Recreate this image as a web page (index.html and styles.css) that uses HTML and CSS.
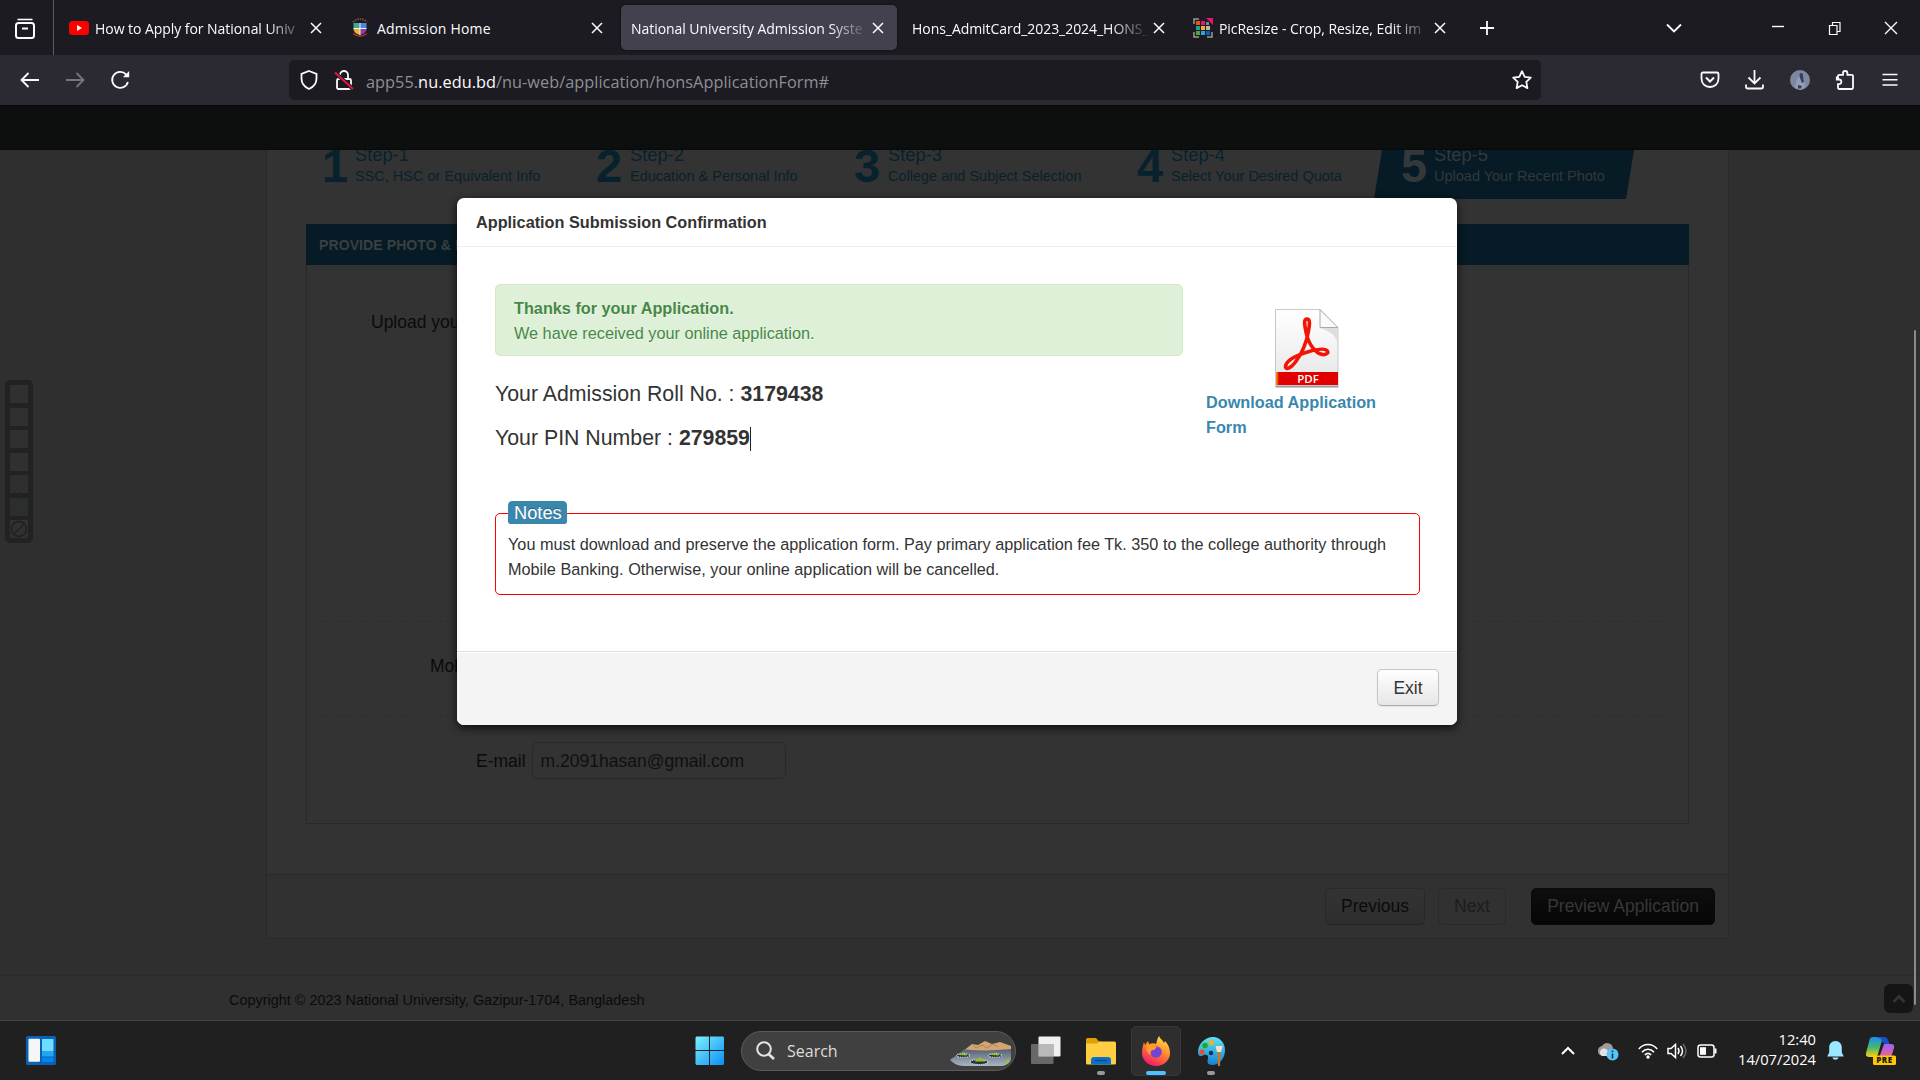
FILE: index.html
```html
<!DOCTYPE html>
<html lang="en">
<head>
<meta charset="utf-8">
<title>National University Admission System</title>
<link rel="stylesheet" href="styles.css">
</head>
<body>
<div class="tabbar">
  <div class="tab-overview">
    <svg width="22" height="22" viewBox="0 0 22 22" fill="none" stroke="#fbfbfe" stroke-width="2"><path d="M3.5 1.5h15" stroke-width="1.6"/><rect x="2" y="5" width="18" height="15" rx="2.5"/><path d="M8 10.5h6"/></svg>
  </div>
  <div class="tabs">
    <div class="tab">
      <svg class="fav" width="20" height="20" viewBox="0 0 20 20"><rect y="3" width="20" height="14" rx="3.5" fill="#f00"/><path d="M8 7l5 3-5 3z" fill="#fff"/></svg>
      <span class="tab-title fade">How to Apply for National Univ</span>
      <svg class="x" width="12" height="12" viewBox="0 0 12 12"><path d="M1 1l10 10M11 1L1 11"/></svg>
    </div>
    <div class="tab">
      <svg class="fav" width="20" height="20" viewBox="0 0 20 20"><path d="M3 4q7-6 14 0" fill="none" stroke="#7a4a36" stroke-width="2" stroke-dasharray="1.500 1"/><path d="M3.500 5H10v5.500H3.500z" fill="#3fa7a0"/><path d="M10 5h6.500v5.500H10z" fill="#4d86d8"/><path d="M3.500 10.500H10V17c-4-1-6.500-3-6.500-6.500z" fill="#e2b52c"/><path d="M10 10.500h6.500c0 3.500-2.500 5.500-6.500 6.500z" fill="#8b3ea8"/><path d="M10 5v12M3.500 10.500h13" stroke="#f3f3f3"/><path d="M3 15.500c4 3.500 10 3.500 14 0" fill="none" stroke="#a33" stroke-width="1.500"/></svg>
      <span class="tab-title wide">Admission Home</span>
      <svg class="x" width="12" height="12" viewBox="0 0 12 12"><path d="M1 1l10 10M11 1L1 11"/></svg>
    </div>
    <div class="tab active">
      <span class="tab-title fade">National University Admission Syste</span>
      <svg class="x" width="12" height="12" viewBox="0 0 12 12"><path d="M1 1l10 10M11 1L1 11"/></svg>
    </div>
    <div class="tab">
      <span class="tab-title fade">Hons_AdmitCard_2023_2024_HONS_</span>
      <svg class="x" width="12" height="12" viewBox="0 0 12 12"><path d="M1 1l10 10M11 1L1 11"/></svg>
    </div>
    <div class="tab">
      <svg class="fav" width="20" height="20" viewBox="0 0 20 20"><path d="M1 6V1h5M1 14v5h5M19 14v5h-5" fill="none" stroke="#999" stroke-width="1.500"/><path d="M13 0h7v7z" fill="#ec1075"/><path d="M3 3h4v4H3z" fill="#e8501c"/><path d="M8 3h4v4H8z" fill="#ec1075"/><path d="M13 4h3v3h-3z" fill="#4aa37c"/><path d="M3 8h4v4H3z" fill="#12a59b"/><path d="M8 8h4v4H8z" fill="#f9ad2c"/><path d="M13 8h4v4h-4z" fill="#b9b9b9"/><path d="M3 13h4v4H3z" fill="#4ca82e"/><path d="M8 13h4v4H8z" fill="#2ea3dd"/><path d="M13 13h4v4h-4z" fill="#0b60b0"/></svg>
      <span class="tab-title fade">PicResize - Crop, Resize, Edit im</span>
      <svg class="x" width="12" height="12" viewBox="0 0 12 12"><path d="M1 1l10 10M11 1L1 11"/></svg>
    </div>
  </div>
  <svg class="newtab" width="16" height="16" viewBox="0 0 16 16"><path d="M8 1v14M1 8h14"/></svg>
  <div class="window-controls">
    <svg width="56" height="16" viewBox="-28 -8 56 16"><path d="M-7-3.500L0 3.500 7-3.500" stroke-width="1.800"/></svg>
    <svg width="56" height="16" viewBox="-28 -8 56 16"><path d="M-7-1.500H5"/></svg>
    <svg width="56" height="16" viewBox="-28 -8 56 16"><path d="M-5.500-2.500h7.500v9h-7.500zM-2.500-2.500v-3h7.500v9h-3" stroke-width="1.200"/></svg>
    <svg width="56" height="16" viewBox="-28 -8 56 16"><path d="M-6-6L6 6M6-6L-6 6"/></svg>
  </div>
</div>

<div class="toolbar">
  <div class="nav-buttons">
    <svg width="20" height="20" viewBox="0 0 20 20"><path d="M19 10H2M8.500 3L1.500 10l7 7"/></svg>
    <svg class="off" width="20" height="20" viewBox="0 0 20 20"><path d="M1 10h17M11.500 3l7 7-7 7"/></svg>
    <svg width="20" height="20" viewBox="0 0 20 20"><path d="M17.900 12A8 8 0 1 1 16.200 4.600"/><path d="M19.200 1v6.300h-6.300z" fill="#fbfbfe" stroke="none"/></svg>
  </div>
  <div class="urlbar">
    <svg width="20" height="20" viewBox="0 0 20 20"><path d="M11 1l7.500 2.800v4.700c0 4.800-2.500 8.200-7.500 10.500C6 16.700 3.500 13.300 3.500 8.500V3.800z"/></svg>
    <svg class="lock" width="20" height="20" viewBox="0 0 20 20"><rect x="3" y="9" width="14" height="10" rx="1.500"/><path d="M6 9V5a4 4 0 0 1 8 0v4"/><path d="M1 2.500L19 19" stroke="#1c1b22" stroke-width="4"/><path d="M1 2.500L19 19" stroke="#e2164a" stroke-width="2"/></svg>
    <span class="url">app55.<b>nu.edu.bd</b>/nu-web/application/honsApplicationForm#</span>
    <svg width="20" height="20" viewBox="0 0 20 20"><path d="M10 1.200l2.700 5.600 6.100.8-4.500 4.300 1.100 6.200L10 15.200l-5.400 2.900 1.100-6.200L1.200 7.600l6.100-.8z" stroke-linejoin="round"/></svg>
  </div>
  <div class="tools">
    <svg width="20" height="20" viewBox="0 0 20 20"><path d="M3 2.500h14a1.500 1.500 0 0 1 1.500 1.500v4.500c0 5-3.500 8.500-8.500 8.500S1.500 13.500 1.500 8.500V4A1.500 1.500 0 0 1 3 2.500z"/><path d="M6 7.500l4 4 4-4" stroke-width="2"/></svg>
    <svg width="20" height="20" viewBox="0 0 20 20"><path d="M9.500 0v13M3.500 7.500l6 6 6-6M1 14.500v2.300c0 1 .7 1.700 1.700 1.700h13.600c1 0 1.700-.7 1.700-1.700v-2.300"/></svg>
    <svg width="20" height="20" viewBox="0 0 20 20"><circle cx="10" cy="10" r="10" fill="#7f88a0" stroke="none"/><path d="M5 18l2-9 3-2 4 1 1 9-4 3z" fill="#959eb6" stroke="none"/><path d="M9.500 4c1.500-2 4-.5 3.500 2l1 6-2 1-2-5zM8 15l4 1-1 2.500H8z" fill="#34405f" stroke="none"/></svg>
    <svg width="20" height="20" viewBox="0 0 20 20"><path d="M3 7.500V6a1.200 1.200 0 0 1 1.200-1.200H8V3.200a2.200 2.200 0 0 1 4.400 0v1.600h4.400A1.200 1.200 0 0 1 18 6v11.800a1.200 1.200 0 0 1-1.200 1.200H4.200A1.200 1.200 0 0 1 3 17.800v-3.600h1.500a2.400 2.400 0 0 0 0-4.700H1.800V7.500z"/></svg>
    <svg width="20" height="20" viewBox="0 0 20 20"><path d="M2.500 4.500h15M2.500 9.800h15M2.500 15h15" stroke-width="1.600"/></svg>
  </div>
</div>

<div class="site-nav"></div>
<main class="page">
  <section class="sheet">
    <div class="steps">
      <div class="step"><b>1</b><p><span>Step-1</span>SSC, HSC or Equivalent Info</p></div>
      <div class="step"><b>2</b><p><span>Step-2</span>Education &amp; Personal Info</p></div>
      <div class="step"><b>3</b><p><span>Step-3</span>College and Subject Selection</p></div>
      <div class="step"><b>4</b><p><span>Step-4</span>Select Your Desired Quota</p></div>
      <div class="step current"><b>5</b><p><span>Step-5</span>Upload Your Recent Photo</p></div>
    </div>
    <div class="panel">
      <h2>PROVIDE PHOTO &amp; MOBILE NUMBER</h2>
      <div class="row photo"><label>Upload your photo</label></div>
      <div class="row mobile"><label>Mobile No.</label></div>
      <div class="row email"><label>E-mail</label><div class="input">m.2091hasan@gmail.com</div></div>
    </div>
    <div class="actions">
      <span class="dbtn prev">Previous</span><span class="dbtn next">Next</span><span class="dbtn dark">Preview Application</span>
    </div>
  </section>
  <footer>Copyright © 2023 National University, Gazipur-1704, Bangladesh</footer>

  <div class="swatches"><i></i><i></i><i></i><i></i><i class="hatch"></i><i class="teal"></i><i><svg width="18" height="18" viewBox="0 0 18 18" fill="none" stroke="#202020" stroke-width="1.500"><circle cx="9" cy="9" r="7.500"/><path d="M4.500 13.500l9-9"/></svg></i></div>
  <div class="totop"><svg width="14" height="10" viewBox="0 0 14 10"><path d="M1.500 8L7 2.500 12.500 8" fill="none" stroke="#333" stroke-width="3"/></svg></div>
  <div class="scroll"></div>

  <div class="modal">
    <h3>Application Submission Confirmation</h3>
    <div class="modal-body">
      <div class="top">
        <div class="info">
          <div class="alert"><b>Thanks for your Application.</b><br>We have received your online application.</div>
          <p>Your Admission Roll No. : <b>3179438</b></p>
          <p>Your PIN Number : <b>279859</b><i class="caret"></i></p>
        </div>
        <div class="download">
          <svg width="66" height="80" viewBox="0 0 66 80">
            <defs><linearGradient id="paper" x1="0" y1="0" x2="0" y2="1"><stop offset="0" stop-color="#fff"/><stop offset="1" stop-color="#e6e6e6"/></linearGradient>
            <linearGradient id="band" x1="0" x2="1"><stop offset="0" stop-color="#f7a800"/><stop offset=".05" stop-color="#e10000"/></linearGradient></defs>
            <path d="M1.500 78.500h63" stroke="#999" stroke-width="2"/>
            <path d="M1.500 1.500H46L64 20v57.500H1.500z" fill="url(#paper)" stroke="#c9c9c9"/>
            <path d="M46 20h18v16C62 28 58 24 46 20z" fill="#ddd"/>
            <path d="M46 1.500V19.500h18z" fill="#fafafa" stroke="#aaa"/>
            <path d="M2 64h62v13H2z" fill="url(#band)"/>
            <path d="M11.500 59c0-6 9-11 22-15 9-2.700 17-4 19.500-1.500 2 2.500-1 4.500-4.500 4C41 45.500 34 35 32 24c-1-6-3-13 1-13 3.500 0 2.500 6 1.500 12-2 12-7 23-13 31-4 5.500-9.500 8.500-10 5z" fill="none" stroke="#f21505" stroke-width="3.600"/>
            <text x="34" y="74.800" text-anchor="middle" font-family="Open Sans, sans-serif" font-weight="600" font-size="11.500" fill="#fff">PDF</text>
          </svg>
          <a>Download Application Form</a>
        </div>
      </div>
      <fieldset><legend>Notes</legend>You must download and preserve the application form. Pay primary application fee Tk. 350 to the college authority through Mobile Banking. Otherwise, your online application will be cancelled.</fieldset>
    </div>
    <div class="modal-footer"><span class="exit">Exit</span></div>
  </div>
</main>

<div class="taskbar">
  <div class="tb-left">
    <svg width="30" height="29" viewBox="0 0 30 29"><rect width="30" height="29" rx="1.500" fill="#0b62b4"/><rect x="2.500" y="2.800" width="11.500" height="23" rx="1" fill="#f6f6f6"/><path d="M16 3h11.500v12.500H16z" fill="#6cdcff"/><path d="M16 16h11.500v4.500H16z" fill="#1ea7f5"/><path d="M16 21.500h11.500v4.500H16z" fill="#0586ee"/></svg>
  </div>
  <div class="tb-center">
    <svg width="30" height="30" viewBox="0 0 30 30"><defs><linearGradient id="win" x1="0" y1="0" x2="1" y2="1"><stop offset="0" stop-color="#7cf1ff"/><stop offset="1" stop-color="#0c8ff5"/></linearGradient></defs><path d="M1.500.5H14V14H.5V1.500zM15 .5h13l1 1V14H15zM.5 15H14v14H1.500l-1-1zM15 15h14v13l-1 1H15z" fill="url(#win)"/></svg>
    <div class="search">
      <svg width="20" height="20" viewBox="0 0 20 20" fill="none" stroke="#e4e4e4" stroke-width="2"><circle cx="8" cy="8" r="6.800"/><path d="M12.500 13l5.500 5" stroke-width="2.600"/></svg>
      <span>Search</span>
      <svg class="scene" width="62" height="26" viewBox="0 -3 62 26"><defs><linearGradient id="lake" x1="0" y1="0" x2="0" y2="1"><stop offset="0" stop-color="#566070"/><stop offset="1" stop-color="#a8b6c4"/></linearGradient></defs><path d="M14 6h47v11c-2 4-6 6-11 6H14C8 23 3 20 0 17c5-4 10-6 14-11z" fill="url(#lake)"/><path d="M15 6.500L22 1l6 1 7-4 7 3 8-2 11 4v3c-14 1.500-30 2-46 .5z" fill="#d1a574"/><path d="M23 2l3 3 6-3 5 3 6-4 5 3" fill="none" stroke="#b08458" stroke-width="1"/><g fill="#29323a" stroke="#c9d0d0" stroke-width="1.300" stroke-dasharray="1.300 .9"><ellipse cx="13" cy="12.500" rx="6.500" ry="2"/><ellipse cx="45" cy="12.500" rx="6.500" ry="2"/><ellipse cx="29" cy="19" rx="9" ry="2.600"/></g><g fill="#8fc42c"><path d="M9 12l1-2 2 1 1-2 1 2h3v1.500zM41 12l1-2 2 1 1-2 1 2h3v1.500zM25 18.500l1-3 3 1 1-3 2 3h3v2zM54 20l3-3 2-2v5z"/></g></svg>
    </div>
    <svg class="tv" width="30" height="29" viewBox="0 0 30 29"><rect x="7.500" y=".5" width="22" height="20" rx="1" fill="#f0f0f0"/><rect y="8" width="22.500" height="20" rx="1" fill="#7c7c7c" fill-opacity=".78"/><path d="M7.500 8h15v12.500h-15z" fill="#b9b9b9"/></svg>
    <div class="app"><svg width="30" height="28" viewBox="0 0 30 28"><path d="M0 2.500Q0 1 1.500 1H10l3 3.500H15V9H0z" fill="#e0a100"/><path d="M0 6.500h11l2.500-2H28.500Q30 4.500 30 6v20q0 1.500-1.500 1.500h-27Q0 27.500 0 26z" fill="#ffcd42"/><path d="M5 27.500V23q0-3 3-3h14q3 0 3 3v4.500z" fill="#0b70c8"/><path d="M9 23.500h12" stroke="#084b90" stroke-width="1.500"/></svg><u></u></div>
    <div class="app current"><svg width="30" height="30" viewBox="0 0 30 30"><defs><linearGradient id="fx" x1=".8" y1="0" x2=".3" y2="1"><stop offset="0" stop-color="#ffe64a"/><stop offset=".45" stop-color="#ff8d2b"/><stop offset="1" stop-color="#f5156c"/></linearGradient></defs><path d="M18 0c1 3 4 4 5 7l1-2c3 3 5 7 5 12a14 13 0 0 1-28 0C1 13 2 9 3 6l1 3 3-4 1 3c3-1 5-1 7 0 1-3 1-5 3-8z" fill="url(#fx)"/><circle cx="15" cy="16" r="5.800" fill="#7542d6"/><path d="M6 9c3-2 6 1 10 2l-3 3c-3 0-4 2-3 5-3-1-6-5-4-10z" fill="#ff9a2c"/></svg><u></u></div>
    <div class="app"><svg width="29" height="30" viewBox="0 0 29 30"><defs><linearGradient id="pt" x1="0" y1="0" x2="0" y2="1"><stop offset="0" stop-color="#5fe0f5"/><stop offset="1" stop-color="#1482cf"/></linearGradient></defs><path d="M16 1c7 0 12 6 12 13 0 8-5 15-13 15-5 0-5-4-4-6 1-4-2-5-4-4-4 2-6 1-6-3C1 8 8 1 16 1z" fill="url(#pt)"/><circle cx="8" cy="9.500" r="2.800" fill="#29a318"/><circle cx="14.500" cy="6.500" r="2.600" fill="#f3b21c"/><circle cx="5" cy="16" r="2.600" fill="#df5527"/><circle cx="14" cy="17" r="2.300" fill="#16364c"/><path d="M18.500 10h7l-1.500 6h-4z" fill="#f3e2c6"/><path d="M20.500 16h3l-.5 14h-2z" fill="#c87920"/></svg><u></u></div>
  </div>
  <div class="tb-right">
    <svg width="14" height="14" viewBox="0 0 14 14" fill="none" stroke="#fff" stroke-width="2"><path d="M1 10l6-6 6 6"/></svg>
    <svg width="21" height="20" viewBox="0 0 21 20"><path d="M2 14a5 5 0 0 1 2-9 6 6 0 0 1 11 2l-5 8z" fill="#9c9c9c"/><path d="M4 15a4 4 0 0 1 0-7c3-1 5 0 6 2l2 5z" fill="#e2e2e2"/><circle cx="14.500" cy="13.500" r="6" fill="#58c4f8"/><path d="M14.500 9.500v1.800M14.500 12.500v5" stroke="#10314a" stroke-width="1.600"/></svg>
    <svg width="20" height="16" viewBox="0 0 20 16" fill="none" stroke="#fff" stroke-width="1.600"><path d="M.8 6c5-6 13.400-6 18.400 0M4 9.300c3.500-4 8.500-4 12 0M6.800 12c2-2.200 4.400-2.200 6.400 0"/><circle cx="10" cy="14" r="1.700" fill="#fff" stroke="none"/></svg>
    <svg width="20" height="18" viewBox="0 0 20 18" fill="none" stroke="#fff" stroke-width="1.500"><path d="M1 6.500h3l4.500-4v13l-4.500-4H1z"/><path d="M11 6q2 3 0 6M13.500 4q4 5 0 10"/><path d="M16 2q6 7 0 14" stroke="#686868"/></svg>
    <svg width="20" height="14" viewBox="0 0 20 14" fill="none" stroke="#fff" stroke-width="1.500"><rect x="1" y="1" width="16" height="12" rx="2.500"/><path d="M3 3.200h6v7.600H3z" fill="#fff" stroke="none"/><path d="M17.500 4.500h2v5h-2z" fill="#fff" stroke="none"/></svg>
    <div class="clock">12:40<br>14/07/2024</div>
    <svg width="17" height="19" viewBox="0 0 17 19"><path d="M8.500 0c4 0 6.300 3 6.300 6.500v5l2 4H.2l2-4v-5C2.200 3 4.500 0 8.500 0zM5.500 16.500h6c-.5 3-5.500 3-6 0z" fill="#9be8ff"/></svg>
    <svg class="copilot" width="30" height="29" viewBox="0 0 30 29"><defs><linearGradient id="ca" x1="0" y1="0" x2="0" y2="1"><stop offset="0" stop-color="#1a8df0"/><stop offset=".5" stop-color="#3fb672"/><stop offset="1" stop-color="#ffd20a"/></linearGradient><linearGradient id="cb" x1="0" y1="0" x2="0" y2="1"><stop offset="0" stop-color="#9a63f4"/><stop offset="1" stop-color="#f4648c"/></linearGradient></defs><path d="M7 1h10l-5 17q-1 3-4 3H3q-4 0-3-4L3.500 4Q4 1 7 1z" fill="url(#ca)"/><path d="M10 1h8q3 0 4 3l1.500 4H20q-3 0-4-3-1-3-3-3z" fill="#1b4fd0"/><path d="M18 8h7q4 0 3 4l-2.500 8q-1 2-3 2H13z" fill="url(#cb)"/><rect x="7" y="19.500" width="23" height="9.500" rx="1.500" fill="#ffc800"/><text x="18.500" y="27.300" text-anchor="middle" font-family="Open Sans, sans-serif" font-weight="800" font-size="8" letter-spacing=".5" fill="#1a1a1a">PRE</text></svg>
  </div>
</div>
</body>
</html>
```

FILE: styles.css
```css
* { box-sizing: border-box; }
body { margin: 0; width: 1920px; height: 1080px; overflow: hidden; background: #2f2f2f; font-family: "Liberation Sans", Arial, sans-serif; }
svg { display: block; flex: none; }
p, h2, h3 { margin: 0; }

/* Browser tabs */
.tabbar { display: flex; align-items: center; height: 55px; background: #1c1b22; color: #fbfbfe; font: 14px "Open Sans", sans-serif; }
.tab-overview { width: 54px; height: 55px; padding: 18px 0 0 14px; border-right: 1px solid #5a5962; }
.tabs { display: flex; margin-left: 2px; }
.tab { display: flex; align-items: center; width: 276px; height: 45px; margin: 0 2px 0 3px; padding: 0 13px 0 10px; border-radius: 5px; }
.tab.active { background: #42414d; box-shadow: 0 0 3px #0008; }
.fav { margin-right: 6px; }
.tab-title { flex: 1; white-space: nowrap; letter-spacing: -.05px; line-height: 24px; padding-top: 2px; min-width: 0; }
.tab-title.wide { letter-spacing: .2px; margin-left: 1px; }
.fade { -webkit-mask-image: linear-gradient(to left, transparent, #000 38px); mask-image: linear-gradient(to left, transparent, #000 38px); }
.x { margin-left: 4px; fill: none; stroke: #fbfbfe; stroke-width: 1.5; }
.newtab { margin-left: 18px; fill: none; stroke: #fbfbfe; stroke-width: 1.8; }
.window-controls { display: flex; margin-left: auto; padding-right: 1px; }
.window-controls svg { fill: none; stroke: #fbfbfe; stroke-width: 1.4; }
.window-controls svg:first-child { margin-right: 49px; }

/* Navigation toolbar */
.toolbar { display: flex; align-items: center; height: 50px; background: #2b2a33; }
.toolbar svg { fill: none; stroke: #fbfbfe; stroke-width: 1.8; }
.toolbar .off { stroke: #77767e; }
.nav-buttons { display: flex; gap: 25px; width: 289px; padding-left: 20px; }
.urlbar { display: flex; align-items: center; width: 1252px; height: 40px; padding: 0 9px; border-radius: 5px; background: #1c1b22; }
.lock { margin-left: 16px; }
.url { flex: 1; margin-left: 12px; padding-top: 3px; color: #8f8e96; font: 16.3px/24px "Open Sans", sans-serif; letter-spacing: .04px; }
.url b { color: #fbfbfe; font-weight: 400; }
.tools { display: flex; gap: 25px; margin-left: auto; padding-right: 20px; }
.site-nav { height: 45px; background: #0d0f0e; border-top: 1px solid #060707; border-bottom: 1px solid #080909; }

/* Dimmed application page */
.page { position: relative; height: 870px; overflow: hidden; background: #2f2f2f; color: #0b0b0b; }
.sheet { width: 1463px; height: 789px; margin-left: 266px; border: 1px solid #292929; border-top: 0; background: #333; }
.steps { display: grid; grid-template-columns: 275px 258px 283px 237px 260px; height: 49px; padding-left: 54px; color: #07222c; }
.step { display: flex; gap: 8px; }
.step b { width: 26px; font-size: 47px; line-height: 50px; margin-top: -9px; }
.step:first-child b { margin: -9px -1px 0 1px; }
.step p { margin-top: -6px; font-size: 14.5px; line-height: 22px; white-space: nowrap; }
.step span { display: block; font-size: 18.3px; line-height: 21px; }
.step.current { height: 49px; padding-left: 27px; gap: 7px; color: #33383a; background: #061b26; clip-path: polygon(8px 0, 100% 0, 252px 100%, 0 100%); }
.panel { width: 1383px; height: 600px; margin: 25px 0 0 39px; border: 1px solid #292929; border-top: 0; }
.panel h2 { height: 41px; margin: 0 -1px; padding-left: 13px; background: #061b26; color: #3a3f41; font-size: 14px; line-height: 42px; letter-spacing: .1px; }
.row { display: flex; margin: 0 13px; font-size: 17.5px; line-height: 37px; border-bottom: 1px dashed #2e2e2e; }
.row label { text-align: right; white-space: nowrap; }
.photo { height: 357px; padding: 39px 0 0 51px; }
.mobile { height: 95px; padding: 26px 0 0 110px; }
.email { padding: 25px 0 0 156px; border: 0; }
.email label { padding-top: 1px; }
.input { width: 254px; height: 37px; margin-left: 6px; padding-left: 8px; border: 1px solid #292929; border-radius: 5px; line-height: 36px; color: #101010; }
.actions { display: flex; justify-content: flex-end; height: 64px; margin-top: 50px; padding: 13px 13px 0 0; border-top: 1px solid #292929; background: #313131; }
.dbtn { height: 37px; border: 1px solid #292929; border-radius: 5px; font-size: 17.5px; line-height: 35px; text-align: center; }
.prev { width: 100px; background: linear-gradient(#333, #2e2e2e); border-bottom-color: #242424; }
.next { width: 68px; margin: 0 25px 0 13px; color: #1c1c1c; }
.dark { width: 184px; background: linear-gradient(#0e0e0e, #060606); border-color: #0a0a0a; color: #383838; }
footer { height: 45px; margin-top: 36px; padding-left: 229px; border-top: 1px solid #2b2b2b; background: #303030; font-size: 14.45px; line-height: 48px; }

/* Items floating over the page */
.swatches { position: absolute; left: 5px; top: 230px; display: grid; grid-auto-rows: 18px; gap: 4.500px; width: 28px; height: 163px; padding: 5px; border-radius: 5px; background: #222; }
.swatches i { background: #303030; }
.swatches .hatch { background: repeating-linear-gradient(135deg, #303030 0 2px, #2d2d2d 2px 4px); }
.swatches .teal { background: #2a2e2e; }
.totop { position: absolute; right: 7px; top: 834px; display: grid; place-items: center; width: 29px; height: 29px; border-radius: 6px; background: #151515; }
.scroll { position: absolute; right: 4px; top: 180px; width: 2px; height: 675px; background: #8a8a8a; border-radius: 1px; }

/* Confirmation dialog */
.modal { position: absolute; left: 457px; top: 48px; width: 1000px; height: 527px; display: flex; flex-direction: column; border-radius: 7px; background: #fff; color: #333; box-shadow: 0 3px 10px #000b; }
.modal h3 { height: 49px; padding-left: 19px; border-bottom: 1px solid #eee; font-size: 16.25px; line-height: 48px; }
.modal-body { flex: 1; padding: 37px 37px 0 38px; }
.top { display: flex; height: 217px; }
.info { width: 688px; margin-right: 23px; }
.alert { height: 72px; padding: 11px 18px; margin-bottom: 16px; border: 1px solid #d6e9c6; border-radius: 5px; background: #dff0d8; color: #468847; font-size: 16.25px; line-height: 25px; text-shadow: 0 1px 0 #ffffff80; }
.info p { height: 44px; font-size: 21.3px; line-height: 44px; }
.caret { display: inline-block; width: 1px; height: 24px; background: #222; vertical-align: -6px; }
.download { width: 190px; padding-top: 24px; color: #3a87ad; font-size: 16.25px; font-weight: 700; line-height: 25px; }
.download svg { margin: 0 0 2px 68px; }
fieldset { min-width: 0; height: 94px; margin: 0; padding: 6px 12px 0; border: 1px solid #f00; border-radius: 5px; font-size: 16.25px; line-height: 25px; }
legend { height: 25px; padding: 0 5px 0 6px; border-bottom: 2px solid transparent; border-radius: 4px; background: #3a87ad; background-clip: padding-box; color: #fff; font-size: 18.3px; line-height: 23px; text-shadow: 0 -1px 0 #00000040; }
.modal-footer { height: 74px; padding: 17px 18px; display: flex; justify-content: flex-end; border-top: 1px solid #ddd; box-shadow: inset 0 1px #fff; border-radius: 0 0 7px 7px; background: #f4f4f4; }
.exit { width: 62px; height: 37px; border: 1px solid #c5c5c5; border-bottom-color: #aaa; border-radius: 5px; background: linear-gradient(#fff, #e6e6e6); box-shadow: 0 1px 2px #0001; font-size: 17.5px; line-height: 36px; text-align: center; }

/* Windows taskbar */
.taskbar { display: grid; grid-template-columns: 695px 1fr auto; align-items: center; height: 60px; border-top: 1px solid #454545; background: #202020; color: #fff; font-family: "Open Sans", sans-serif; }
.tb-left { padding-left: 26px; }
.tb-center { display: flex; align-items: center; }
.search { display: flex; align-items: center; width: 275px; height: 40px; margin: 0 15px 0 16px; padding: 0 3px 0 14px; border: 1px solid #5a5a5a; border-radius: 20px; background: #404040; color: #ddd; font-size: 16px; }
.search span { flex: 1; margin-left: 11px; }
.scene { margin-top: 4px; }
.tv { margin-right: 15px; }
.app { position: relative; display: grid; place-items: center; width: 50px; height: 50px; margin-right: 5px; border-radius: 5px; }
.app.current { background: #2e2e2e; border: 1px solid #373737; }
.app u { position: absolute; left: 21px; bottom: 1px; width: 8px; height: 4px; border-radius: 2px; background: #9a9a9a; }
.app.current u { left: 14px; bottom: 0; width: 20px; background: #4cc2ff; }
.tb-right { display: flex; align-items: center; padding-right: 24px; }
.tb-right svg { margin-right: 9px; }
.tb-right svg:first-child { margin-right: 23px; }
.tb-right svg:nth-child(2) { margin-right: 19px; }
.tb-right svg:nth-child(4) { margin-right: 10px; }
.tb-right svg:nth-child(5) { margin-right: 19px; }
.clock { width: 80px; margin-right: 11px; text-align: right; font-size: 14.7px; line-height: 20px; padding-bottom: 4px; white-space: nowrap; }
.tb-right .clock + svg { margin-right: 22px; }
.tb-right .copilot { margin-right: 0; }
```
